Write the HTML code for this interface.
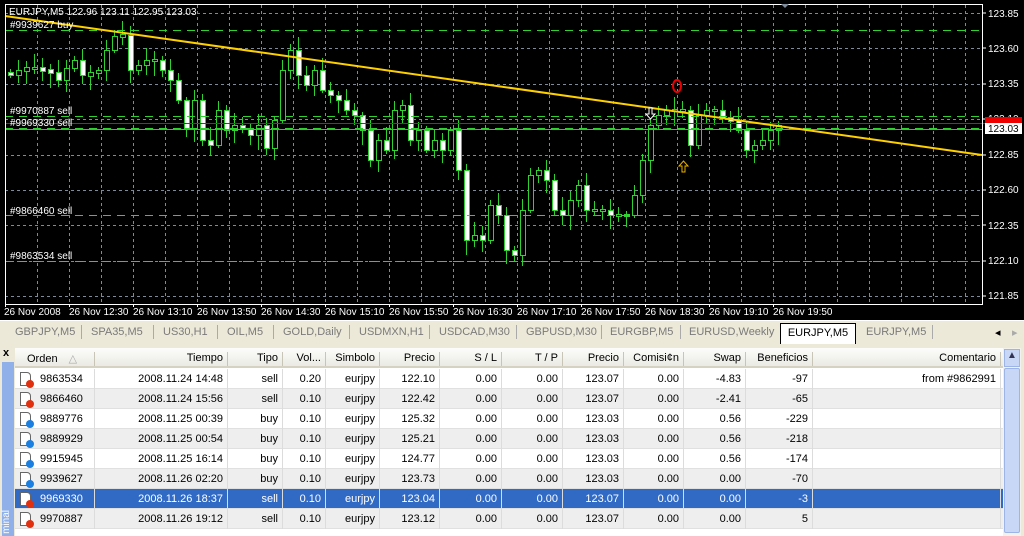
<!DOCTYPE html>
<html><head><meta charset="utf-8"><style>
*{margin:0;padding:0;box-sizing:border-box}
body{width:1024px;height:536px;overflow:hidden;background:#ece9d8;font-family:"Liberation Sans","DejaVu Sans",sans-serif;font-size:11px;position:relative}
#chart{position:absolute;left:0;top:0;width:1024px;height:320px;background:#000}
#tabs{position:absolute;left:0;top:320px;width:1024px;height:24px;background:#ece9d8;border-top:1px solid #fff}
.tab{position:absolute;top:5px;color:#7a7a7a;font-size:11px}
.sep{position:absolute;top:4px;width:1px;height:14px;background:#aaa}
#act{position:absolute;left:780px;top:2px;width:76px;height:21px;background:#fff;border:1px solid #000;border-bottom:none;color:#000;text-align:center;padding-top:3px}
#tbl{position:absolute;left:15px;top:348px;width:988px;height:188px;background:#fff}
.hdr{position:absolute;left:0;top:0;height:20px;width:988px;background:linear-gradient(#fdfdfb,#ebeae4);border-bottom:2px solid #d6d2c2}
.c{position:absolute;white-space:nowrap;text-align:right;padding-right:4px}
.hdr .c{top:4px;height:14px;border-right:1px solid #c8c5b8}
.row{position:absolute;left:0;width:988px;height:20px;border-bottom:1px solid #e0e0e0}
.row .c{height:20px;top:0;padding-top:4px;border-right:1px solid #dcdcdc}
.sel{background:#316ac5;color:#fff}
.ic{position:absolute;left:5px;top:3px;width:11px;height:14px;background:#fff;border:1px solid #666;border-radius:0 4px 0 0}
.ic i{position:absolute;left:5px;top:7px;width:8px;height:8px;border-radius:50%}
</style></head><body>
<div id="chart"><svg id="sv" width="1024" height="320" xmlns="http://www.w3.org/2000/svg" font-family="Liberation Sans, DejaVu Sans, sans-serif" font-size="10">
<g id="grid" stroke="#7d8a99" stroke-dasharray="3,3" stroke-width="1"></g>
<g id="cd"></g>
<g fill="none" stroke="#2fd22f" stroke-dasharray="8,6" stroke-width="1">
<line x1="5" y1="30.5" x2="982" y2="30.5"/><line x1="5" y1="116.5" x2="982" y2="116.5"/><line x1="5" y1="128.5" x2="982" y2="128.5"/><line x1="5" y1="215.5" x2="982" y2="215.5"/><line x1="5" y1="261.5" x2="982" y2="261.5"/>
</g>
<line x1="5" y1="123.5" x2="1000" y2="123.5" stroke="#e00" stroke-width="1"/>
<line x1="5" y1="129.5" x2="982" y2="129.5" stroke="#8a8a8a" stroke-width="1"/>
<line x1="5" y1="16" x2="982" y2="155" stroke="#ffd000" stroke-width="2"/>
<rect x="5.5" y="4.5" width="977" height="300" fill="none" stroke="#fff"/>
<ellipse cx="677" cy="86" rx="4" ry="6" fill="none" stroke="#e00" stroke-width="2"/>
<path d="M682 172h3v-6h3l-4.5-5-4.5 5h3z" fill="none" stroke="#e8b000"/>
<path d="M649 108h3v6h3l-4.5 5-4.5-5h3z" fill="#000" stroke="#fff"/>
<g fill="#fff">
<text x="9" y="15">EURJPY,M5  122.96 123.11 122.95 123.03</text>
<text x="10" y="28">#9939627 buy</text>
<text x="10" y="114">#9970887 sell</text>
<text x="10" y="126">#9969330 sell</text>
<text x="10" y="214">#9866460 sell</text>
<text x="10" y="259">#9863534 sell</text>
<text x="988" y="17">123.85</text><text x="988" y="52">123.60</text><text x="988" y="87">123.35</text><text x="988" y="122">123.10</text><text x="988" y="158">122.85</text><text x="988" y="193">122.60</text><text x="988" y="229">122.35</text><text x="988" y="264">122.10</text><text x="988" y="299">121.85</text>
</g>
<g stroke="#fff"><line x1="983" y1="13" x2="986" y2="13"/><line x1="983" y1="48" x2="986" y2="48"/><line x1="983" y1="84" x2="986" y2="84"/><line x1="983" y1="119" x2="986" y2="119"/><line x1="983" y1="155" x2="986" y2="155"/><line x1="983" y1="190" x2="986" y2="190"/><line x1="983" y1="225" x2="986" y2="225"/><line x1="983" y1="261" x2="986" y2="261"/><line x1="983" y1="296" x2="986" y2="296"/></g>
<rect x="985" y="117" width="37" height="10" fill="#e00"/>
<rect x="985" y="123" width="37" height="11" fill="#fff"/>
<text x="988" y="132" fill="#000">123.03</text>
<g id="tl" fill="#fff"></g>
<path d="M781 4l4 4 4-4z" fill="#7d8a99"/>
</svg></div>
<div id="tabs">
<span class="tab" style="left:15px">GBPJPY,M5</span><span class="sep" style="left:81px"></span>
<span class="tab" style="left:91px">SPA35,M5</span><span class="sep" style="left:153px"></span>
<span class="tab" style="left:163px">US30,H1</span><span class="sep" style="left:217px"></span>
<span class="tab" style="left:227px">OIL,M5</span><span class="sep" style="left:273px"></span>
<span class="tab" style="left:283px">GOLD,Daily</span><span class="sep" style="left:349px"></span>
<span class="tab" style="left:359px">USDMXN,H1</span><span class="sep" style="left:429px"></span>
<span class="tab" style="left:439px">USDCAD,M30</span><span class="sep" style="left:516px"></span>
<span class="tab" style="left:526px">GBPUSD,M30</span><span class="sep" style="left:601px"></span>
<span class="tab" style="left:610px">EURGBP,M5</span><span class="sep" style="left:680px"></span>
<span class="tab" style="left:689px">EURUSD,Weekly</span>
<div id="act">EURJPY,M5</div>
<span class="tab" style="left:866px">EURJPY,M5</span><span class="sep" style="left:932px"></span>
<span class="tab" style="left:995px;color:#000">◂</span><span class="tab" style="left:1012px;color:#aaa">▸</span>
</div>
<div style="position:absolute;left:3px;top:347px;font-weight:bold;font-size:11px">x</div>
<div style="position:absolute;left:2px;top:362px;width:12px;height:174px;background:#8fb0e8"></div>
<div style="position:absolute;left:1px;top:510px;width:12px;color:#fff;font-size:10px;writing-mode:vertical-rl;transform:rotate(180deg)">minal</div>
<div id="tbl"></div>
<div style="position:absolute;left:1003px;top:348px;width:18px;height:188px;background:#f3f1ea"></div>
<div style="position:absolute;left:1004px;top:349px;width:16px;height:18px;background:#c7d7f5;border:1px solid #9cb5e6;text-align:center;font-size:10px;color:#335">▲</div>
<div style="position:absolute;left:1004px;top:368px;width:16px;height:165px;background:#c7d7f5;border:1px solid #9cb5e6;border-radius:2px"></div>
<script>
var sv=document.getElementById('grid'),h='';
for(var x=37;x<982;x+=32)h+='<line x1="'+(x+.5)+'" y1="5" x2="'+(x+.5)+'" y2="304"/>';
[13,48,84,119,155,190,225,261,296].forEach(function(y){h+='<line x1="5" y1="'+(y+.5)+'" x2="982" y2="'+(y+.5)+'"/>'});
sv.innerHTML=h;
var tl=['26 Nov 2008','26 Nov 12:30','26 Nov 13:10','26 Nov 13:50','26 Nov 14:30','26 Nov 15:10','26 Nov 15:50','26 Nov 16:30','26 Nov 17:10','26 Nov 17:50','26 Nov 18:30','26 Nov 19:10','26 Nov 19:50'];
var t='';tl.forEach(function(s,i){var x=5+i*64;t+='<text x="'+(x+(i?0:-1))+'" y="315">'+s+'</text><rect x="'+x+'" y="304" width="1" height="3"/>';});
document.getElementById('tl').innerHTML=t;
var cl=[75,70,68,68,70,72,80,68,60,75,73,70,50,36,35,70,65,60,60,70,80,100,128,100,140,145,110,130,125,128,135,125,148,120,70,50,75,85,70,90,95,100,110,115,130,160,140,150,110,105,140,130,150,140,150,130,170,240,235,240,205,215,250,255,210,175,170,180,210,215,200,185,210,210,210,215,215,215,195,160,125,115,110,110,110,145,115,110,110,118,120,130,150,145,140,130,125];
var c='',o=72;
for(var i=0;i<cl.length;i++){var x=10+i*8,cv=cl[i],t0=Math.min(o,cv),b0=Math.max(o,cv);if(b0-t0<3){t0-=1;b0+=1;}
var hi=t0-3-((i*7)%11),lo=b0+3+((i*5)%13);
c+='<line x1="'+(x+.5)+'" y1="'+hi+'" x2="'+(x+.5)+'" y2="'+lo+'" stroke="#2fd22f"/>';
c+='<rect x="'+(x-2+.5)+'" y="'+(t0+.5)+'" width="5" height="'+(b0-t0)+'" fill="'+(cv>o?'#fff':'#000')+'" stroke="#2fd22f"/>';o=cv;}
document.getElementById('cd').innerHTML=c;
var cols=[['Orden',0,80],['Tiempo',80,213],['Tipo',213,268],['Vol...',268,311],['Simbolo',311,365],['Precio',365,425],['S / L',425,487],['T / P',487,548],['Precio',548,609],['Comisi¢n',609,669],['Swap',669,731],['Beneficios',731,798],['Comentario',798,986]];
var rows=[['9863534','2008.11.24 14:48','sell','0.20','eurjpy','122.10','0.00','0.00','123.07','0.00','-4.83','-97','from #9862991'],
['9866460','2008.11.24 15:56','sell','0.10','eurjpy','122.42','0.00','0.00','123.07','0.00','-2.41','-65',''],
['9889776','2008.11.25 00:39','buy','0.10','eurjpy','125.32','0.00','0.00','123.03','0.00','0.56','-229',''],
['9889929','2008.11.25 00:54','buy','0.10','eurjpy','125.21','0.00','0.00','123.03','0.00','0.56','-218',''],
['9915945','2008.11.25 16:14','buy','0.10','eurjpy','124.77','0.00','0.00','123.03','0.00','0.56','-174',''],
['9939627','2008.11.26 02:20','buy','0.10','eurjpy','123.73','0.00','0.00','123.03','0.00','0.00','-70',''],
['9969330','2008.11.26 18:37','sell','0.10','eurjpy','123.04','0.00','0.00','123.07','0.00','0.00','-3',''],
['9970887','2008.11.26 19:12','sell','0.10','eurjpy','123.12','0.00','0.00','123.07','0.00','0.00','5','']];
var s='<div class="hdr">';
cols.forEach(function(k,i){s+='<div class="c" style="left:'+k[1]+'px;width:'+(k[2]-k[1])+'px;'+(i==0?'text-align:left;padding-left:12px':'')+'">'+k[0]+(i==0?' <span style="color:#aaa;margin-left:8px">△</span>':'')+'</div>'});
s+='</div>';
rows.forEach(function(r,j){var cls=j==6?'row sel':'row';var bg=j==6?'':(j%2?'background:#eeeeee':'background:#fff');
s+='<div class="'+cls+'" style="top:'+(21+j*20)+'px;'+bg+'">';
var buy=r[2]=='buy';
s+='<div class="ic"><i style="background:'+(buy?'#1a7fe0':'#e03010')+'"></i></div>';
cols.forEach(function(k,i){s+='<div class="c" style="left:'+k[1]+'px;width:'+(k[2]-k[1])+'px;'+(i==0?'text-align:left;padding-left:25px':'')+'">'+r[i]+'</div>'});
s+='</div>';});
document.getElementById('tbl').innerHTML=s;
</script>
</body></html>
